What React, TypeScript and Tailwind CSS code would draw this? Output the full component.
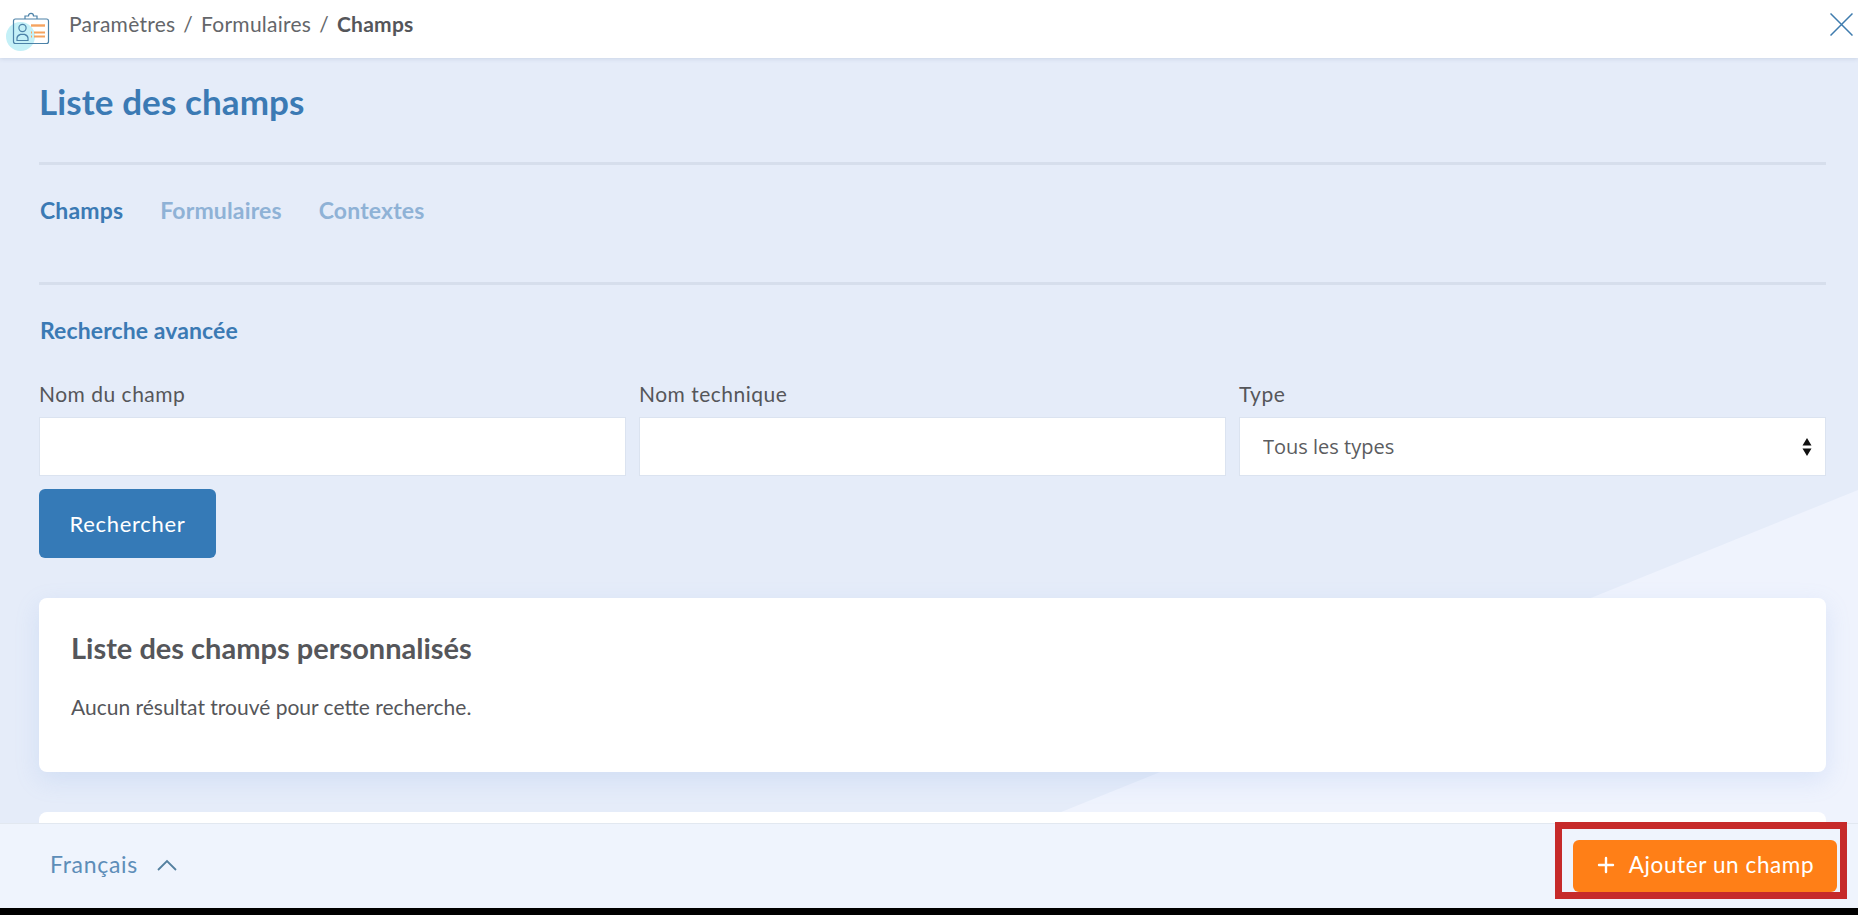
import { Plus } from "lucide-react";

const font = "font-['Lato','Noto_Sans',sans-serif]";

function BadgeIcon() {
  return (
    <div className="relative h-[44px] w-[52px] shrink-0">
      <div className="absolute left-[6px] top-[15px] h-[29px] w-[29px] rounded-full bg-[#c4f0f7]" />
      <svg viewBox="0 0 52 44" className="absolute inset-0 h-[44px] w-[52px]" fill="none">
        <rect x="13.5" y="12" width="35" height="24.5" rx="2" stroke="#4c82a8" strokeWidth="1.2" />
        <path d="M25 12v-3h3.5c0-3.6 5-3.6 5 0H37v3" stroke="#4c82a8" strokeWidth="1.2" />
        <circle cx="22.5" cy="21" r="3.6" stroke="#4c82a8" strokeWidth="1.2" />
        <path d="M17 33.5v-2.5c0-2 2-3 3.5-3.6h4c1.500.6 3.500 1.600 3.500 3.600v2.500z" stroke="#4c82a8" strokeWidth="1.2" />
        <path d="M31 18.500h14" stroke="#f5a35f" strokeWidth="2.4" />
        <path d="M34 25.500h11M34 29.500h11" stroke="#f5a35f" strokeWidth="2" />
        <path d="M31 25.500h1M31 29.500h1" stroke="#f5a35f" strokeWidth="2" />
      </svg>
    </div>
  );
}

function Field({ label, children }: { label: string; children: React.ReactNode }) {
  return (
    <div className="flex flex-col">
      <label className="mb-[11px] text-[21px] leading-[24px] tracking-[0.5px] text-[#55565a]">{label}</label>
      {children}
    </div>
  );
}

export default function App() {
  return (
    <div className={`relative flex h-[915px] flex-col overflow-hidden bg-black ${font}`}>
      <header className="relative z-10 flex h-[58px] shrink-0 items-center bg-white pr-[5px] shadow-[0_1px_4px_rgba(90,110,150,0.18)]">
        <BadgeIcon />
        <nav className="ml-[17px] flex items-center gap-[8px] pb-[10px] text-[21px] tracking-[0.25px] text-[#64666a]">
          <span>Paramètres</span>
          <span>/</span>
          <span>Formulaires</span>
          <span>/</span>
          <span className="font-bold text-[#55565a]">Champs</span>
        </nav>
        <svg viewBox="0 0 23 23" className="mb-[9px] ml-auto h-[23px] w-[23px]" stroke="#3f7cae" strokeWidth="1.5" fill="none">
          <path d="M0.5 0.5l22 22M22.5 0.5l-22 22" />
        </svg>
      </header>

      <main className="relative min-h-0 flex-1 overflow-hidden bg-[#e5ecf9] pl-[39px] pr-[32px]">
        <div className="absolute inset-0 bg-[#eff3fd] [clip-path:polygon(1858px_432px,1858px_765px,1034px_765px)]" />

        <div className="relative">
          <h1 className="pt-[23px] pb-[2px] text-[35px] font-bold leading-[40px] tracking-[0.1px] text-[#3b7ab4]">Liste des champs</h1>
          <div className="mt-[39px] h-[3px] bg-[#d6deec]" />

          <div className="mt-[32px] flex gap-[37px] text-[23px] font-bold leading-[26px] tracking-[0.15px]">
            <span className="ml-[1px] text-[#3b7ab4]">Champs</span>
            <span className="text-[#8fb2d6]">Formulaires</span>
            <span className="text-[#8fb2d6]">Contextes</span>
          </div>
          <div className="mt-[59px] h-[3px] bg-[#d6deec]" />

          <h2 className="ml-[1px] mt-[32px] text-[23px] font-bold leading-[26px] tracking-[0.1px] text-[#3b7ab4]">Recherche avancée</h2>

          <div className="mt-[39px] grid grid-cols-3 gap-[13px]">
            <Field label="Nom du champ">
              <input className="h-[59px] w-full border border-[#dbe3f0] bg-white" />
            </Field>
            <Field label="Nom technique">
              <input className="h-[59px] w-full border border-[#dbe3f0] bg-white" />
            </Field>
            <Field label="Type">
              <div className="relative">
                <select className="h-[59px] w-full appearance-none border border-[#dbe3f0] bg-white pl-[23px] font-['Open_Sans',sans-serif] text-[20px] text-[#5b5c60]">
                  <option>Tous les types</option>
                </select>
                <svg viewBox="0 0 10 20" className="absolute right-[14px] top-[20px] h-[20px] w-[10px]" fill="#111">
                  <path d="M5 1l4.500 7.500H.5zM5 19l4.500-7.500H.5z" />
                </svg>
              </div>
            </Field>
          </div>

          <button className="mt-[13px] h-[69px] w-[177px] rounded-[6px] bg-[#357ab7] text-[22px] tracking-[0.7px] text-white">
            Rechercher
          </button>

          <section className="mt-[40px] h-[174px] rounded-[8px] bg-white px-[32px] pt-[33px] shadow-[0_8px_24px_rgba(120,160,230,0.18)]">
            <h3 className="text-[29px] font-bold leading-[34px] text-[#55565a]">Liste des champs personnalisés</h3>
            <p className="mt-[29px] text-[21px] leading-[26px] text-[#55565a]">Aucun résultat trouvé pour cette recherche.</p>
          </section>

          <section className="mt-[40px] h-[120px] rounded-[8px] bg-white" />
        </div>
      </main>

      <footer className="relative z-10 flex h-[85px] shrink-0 items-center justify-between border-t border-[#e2e8f0] bg-[#eff4fd] pl-[50px] pr-[21px]">
        <div className="flex items-center gap-[19px] pb-[3px] text-[23px] tracking-[0.7px] text-[#5d8db8]">
          <span>Français</span>
          <svg viewBox="0 0 20 12" className="h-[12px] w-[20px]" fill="none" stroke="#54809f" strokeWidth="1.8">
            <path d="M1 11l9-9 9 9" />
          </svg>
        </div>
        <button className="flex h-[52px] w-[264px] items-center justify-center gap-[11px] rounded-[6px] bg-[#ff7f17] pb-[2px] pr-[2px] text-[22.5px] tracking-[0.6px] text-white">
          <Plus className="h-[24px] w-[24px]" strokeWidth={2.4} />
          Ajouter un champ
        </button>
      </footer>

      <div className="h-[7px] shrink-0 bg-black" />

      {/* red annotation drawn over the button */}
      <div className="pointer-events-none absolute bottom-[16px] right-[11px] z-20 h-[77px] w-[292px] border-[7px] border-[#c62a2a]" />
    </div>
  );
}
